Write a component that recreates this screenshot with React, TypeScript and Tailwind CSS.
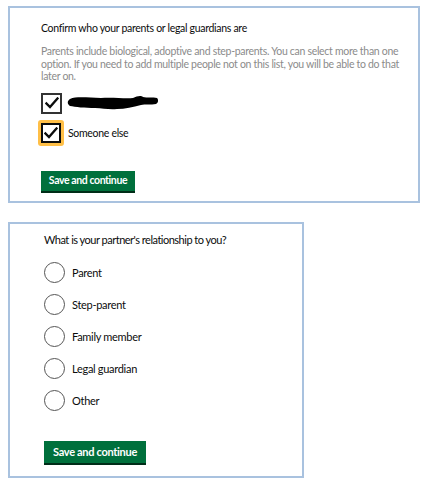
import React from 'react';

const font = { fontFamily: 'Lato, "Liberation Sans", Arial, sans-serif' };

const Tick = () => (
  <svg width="14" height="12" viewBox="0 0 14 12" className="block">
    <path d="M1.5 6.5 L5 10 L12.5 1.5" fill="none" stroke="#0b0c0c" strokeWidth="2.4" strokeLinecap="square" />
  </svg>
);

const Redacted = () => (
  <svg width="92" height="16" viewBox="0 0 92 16" className="block">
    <path
      d="M3 4 C10 1 22 3 34 3 C46 2 58 4 66 3 C70 1 74 0 76 2 C80 3 86 2 90 3 C92 5 91 8 89 9 C84 10 78 9 74 10 C66 12 58 14 50 14 C42 15 36 13 28 13 C18 13 8 12 3 11 C0 9 0 6 3 4 Z"
      fill="#000"
    />
  </svg>
);

const SaveButton = ({ className }: { className: string }) => (
  <button
    className={`bg-[#00703c] text-white shadow-[0_2px_0_#002d18] flex items-center justify-center ${className}`}
  >
    Save and continue
  </button>
);

const options = ['Parent', 'Step-parent', 'Family member', 'Legal guardian', 'Other'];

export default function App() {
  return (
    <div className="w-[448px] h-[491px] bg-white text-[#0b0c0c]" style={font}>
      <div className="pt-[6px] pl-[8px]">
        <div className="w-[412px] h-[197px] border-2 border-[#a9c2df] pl-[31px] pt-[13px] tracking-[-0.3px]">
          <p className="text-[10.5px] leading-[14px]">Confirm who your parents or legal guardians are</p>
          <p className="mt-[10px] text-[10.5px] leading-[12.5px] text-[#8b8b8b] w-[364px]">
            Parents include biological, adoptive and step-parents. You can select more than one option. If you need to add multiple people not on this list, you will be able to do that later on.
          </p>
          <div className="mt-[10px] flex items-center gap-[5px]">
            <div className="w-[21px] h-[21px] border-2 border-[#333] flex items-center justify-center">
              <Tick />
            </div>
            <Redacted />
          </div>
          <div className="mt-[6px] -ml-[3px] flex items-center gap-[4px]">
            <div className="rounded-[3px] border-[3px] border-[#ffbf47] p-0">
              <div className="w-[20px] h-[20px] border-2 border-[#0b0c0c] flex items-center justify-center">
                <Tick />
              </div>
            </div>
            <span className="text-[10.5px] leading-[14px]">Someone else</span>
          </div>
          <SaveButton className="mt-[25px] w-[94px] h-[20px] text-[10.5px] font-bold tracking-[-0.4px]" />
        </div>
      </div>
      <div className="pt-[19px] pl-[8px]">
        <div className="w-[296px] h-[256px] border-2 border-[#a9c2df] pl-[34px] pt-[9px] tracking-[-0.3px]">
          <p className="text-[11px] leading-[14px] tracking-[-0.5px]">What is your partner's relationship to you?</p>
          <div className="mt-[15px] flex flex-col gap-[11px]">
            {options.map((o) => (
              <div key={o} className="flex items-center gap-[7px]">
                <div className="w-[21px] h-[21px] rounded-full border-[1.5px] border-[#555]" />
                <span className="text-[11px] leading-[14px]">{o}</span>
              </div>
            ))}
          </div>
          <SaveButton className="mt-[30px] w-[102px] h-[22px] text-[11px] font-bold tracking-[-0.3px]" />
        </div>
      </div>
    </div>
  );
}
